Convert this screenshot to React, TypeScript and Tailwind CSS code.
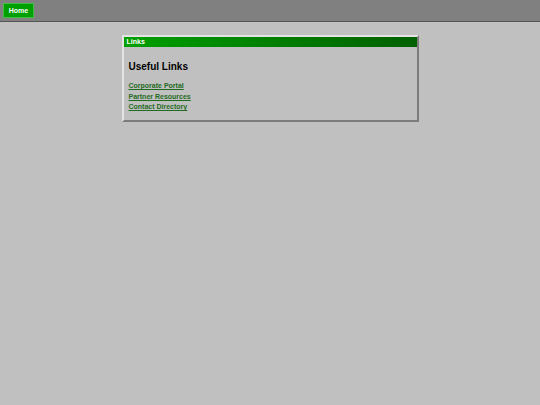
export default function App() {
  const links = ['Corporate Portal', 'Partner Resources', 'Contact Directory'];

  return (
    <div className="min-h-[405px] bg-[#c0c0c0] font-['Liberation_Sans',Arial,sans-serif]">
      {/* Top bar */}
      <div className="flex items-start h-[22px] bg-[#808080] border-b border-[#555555] pt-[3px] pl-[3px]">
        <button className="flex items-center justify-center w-[31px] h-[15px] bg-[#00a000] border border-[#40c040] text-white text-[7px] font-bold leading-none">
          Home
        </button>
      </div>

      {/* Links panel */}
      <div className="mx-auto mt-[13px] w-[297px] border-2 border-t-[#e4e4e4] border-l-[#e4e4e4] border-r-[#7c7c7c] border-b-[#7c7c7c] bg-[#c0c0c0]">
        <div className="h-[10px] bg-gradient-to-r from-[#00a000] to-[#006000] pl-[3px] text-white text-[7px] font-bold leading-[10px]">
          Links
        </div>
        <div className="px-[5px] pt-[14px] pb-[7px]">
          <h2 className="text-[10px] font-bold text-black leading-[12px]">Useful Links</h2>
          <ul className="mt-[8px] text-[7px] leading-[10.5px]">
            {links.map((l) => (
              <li key={l}>
                <a href="#" className="font-bold text-[#1f6b1f] underline">
                  {l}
                </a>
              </li>
            ))}
          </ul>
        </div>
      </div>
    </div>
  );
}
